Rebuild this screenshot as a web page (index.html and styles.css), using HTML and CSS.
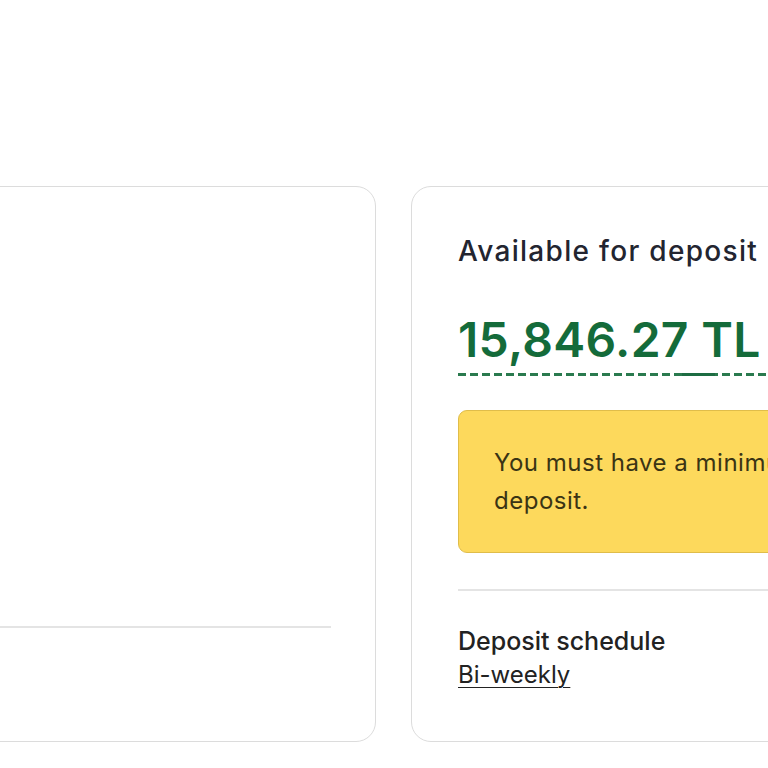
FILE: index.html
```html
<!DOCTYPE html>
<html lang="en">
<head>
<meta charset="utf-8">
<title>Payment account</title>
<link rel="stylesheet" href="styles.css">
</head>
<body>
<main class="page">
  <div class="cards">
    <section class="card card-left">
      <div class="left-body"></div>
      <hr class="divider">
      <div class="left-foot"></div>
    </section>
    <section class="card card-right">
      <h2 class="title">Available for deposit</h2>
      <p class="amount"><span class="amount-value">15,846.27 TL</span></p>
      <div class="alert">
        <p>You must have a minimum balance of 50.00 TL to<br>deposit.</p>
      </div>
      <hr class="divider">
      <div class="schedule">
        <h3 class="schedule-title">Deposit schedule</h3>
        <a class="schedule-link" href="#">Bi-weekly</a>
      </div>
    </section>
  </div>
</main>
</body>
</html>
```

FILE: styles.css
```css
html, body {
  margin: 0;
  padding: 0;
  overflow: hidden;
  background: #fff;
}
body {
  font-family: Inter, "Liberation Sans", sans-serif;
  color: #222;
}
.page {
  padding-top: 186px;
}
.cards {
  display: flex;
  gap: 35px;
  margin-left: -224px;
  align-items: stretch;
}
.card {
  box-sizing: border-box;
  height: 556px;
  border: 1px solid #dcdcdc;
  border-radius: 20px;
  background: #fff;
  flex: none;
  display: flex;
  flex-direction: column;
}
.card-left {
  width: 600px;
  padding: 0 44px;
}
.left-body {
  height: 439px;
}
.left-foot {
  flex: 1;
}
.divider {
  border: 0;
  height: 2px;
  background: #e4e4e4;
  margin: 0;
}
.card-right {
  width: 800px;
  padding: 47px 45px 0 46px;
}
.title {
  margin: 0;
  font-size: 28px;
  line-height: 34px;
  font-weight: 500;
  color: #232530;
  letter-spacing: 1.3px;
}
.amount {
  margin: 47px 0 0 0;
  font-size: 48px;
  line-height: 50px;
  font-weight: 600;
  color: #146b3a;
  letter-spacing: 0.3px;
}
.amount-value {
  display: inline-block;
  padding: 0 30px 11px 0;
  background:
    linear-gradient(#1d6c42, #1d6c42) 224px 100% / 33px 3px no-repeat,
    repeating-linear-gradient(to right, #2a7a4e 0 8px, transparent 8px 12px) 0 100% / 100% 3px no-repeat;
}
.alert {
  margin-top: 34px;
  box-sizing: border-box;
  height: 143px;
  background: #fdd95c;
  border: 1px solid #e0bd4a;
  border-radius: 9px;
  padding: 33px 35px 0;
}
.alert p {
  margin: 0;
  font-size: 24px;
  line-height: 38px;
  color: #3a3414;
  letter-spacing: 0.5px;
  white-space: nowrap;
}
.card-right .divider {
  margin-top: 36px;
}
.schedule {
  margin-top: 36px;
  display: flex;
  flex-direction: column;
  align-items: flex-start;
  gap: 4px;
}
.schedule-title {
  margin: 0;
  font-size: 25px;
  line-height: 29px;
  font-weight: 500;
  color: #222;
}
.schedule-link {
  font-size: 24px;
  line-height: 29px;
  color: #222;
  text-decoration: underline;
  text-underline-offset: 4px;
  text-decoration-thickness: 1px;
}
```
